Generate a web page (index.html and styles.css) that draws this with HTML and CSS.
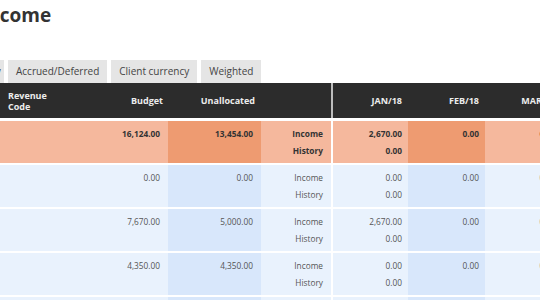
FILE: index.html
```html
<!DOCTYPE html>
<html>
<head>
<meta charset="utf-8">
<link rel="stylesheet" href="styles.css">
</head>
<body>
<div class="page">
  <h1 class="title">Income</h1>
  <div class="tabs">
    <div class="tab tab-first">Summary</div>
    <div class="tab">Accrued/Deferred</div>
    <div class="tab">Client currency</div>
    <div class="tab">Weighted</div>
  </div>
  <div class="grid">
    <div class="row head">
      <div class="c code">Revenue<br>Code</div>
      <div class="c num">Budget</div>
      <div class="c num unalloc">Unallocated</div>
      <div class="c label"></div>
      <div class="c num month sep">JAN/18</div>
      <div class="c num month">FEB/18</div>
      <div class="c num month mar">MAR/18</div>
    </div>
    <div class="row total">
      <div class="c code"></div>
      <div class="c num">16,124.00</div>
      <div class="c num dark">13,454.00</div>
      <div class="c num label"><span>Income</span><span>History</span></div>
      <div class="c num month sep"><span>2,670.00</span><span>0.00</span></div>
      <div class="c num month dark"><span>0.00</span></div>
      <div class="c num month"><span>0.00</span></div>
    </div>
    <div class="row">
      <div class="c code"></div>
      <div class="c num">0.00</div>
      <div class="c num dark">0.00</div>
      <div class="c num label"><span>Income</span><span>History</span></div>
      <div class="c num month sep"><span>0.00</span><span>0.00</span></div>
      <div class="c num month dark"><span>0.00</span></div>
      <div class="c num month"><span>0.00</span></div>
    </div>
    <div class="row">
      <div class="c code"></div>
      <div class="c num">7,670.00</div>
      <div class="c num dark">5,000.00</div>
      <div class="c num label"><span>Income</span><span>History</span></div>
      <div class="c num month sep"><span>2,670.00</span><span>0.00</span></div>
      <div class="c num month dark"><span>0.00</span></div>
      <div class="c num month"><span>0.00</span></div>
    </div>
    <div class="row">
      <div class="c code"></div>
      <div class="c num">4,350.00</div>
      <div class="c num dark">4,350.00</div>
      <div class="c num label"><span>Income</span><span>History</span></div>
      <div class="c num month sep"><span>0.00</span><span>0.00</span></div>
      <div class="c num month dark"><span>0.00</span></div>
      <div class="c num month"><span>0.00</span></div>
    </div>
    <div class="row">
      <div class="c code"></div>
      <div class="c num">0.00</div>
      <div class="c num dark">0.00</div>
      <div class="c num label"><span>Income</span><span>History</span></div>
      <div class="c num month sep"><span>0.00</span><span>0.00</span></div>
      <div class="c num month dark"><span>0.00</span></div>
      <div class="c num month"><span>0.00</span></div>
    </div>
  </div>
</div>
</body>
</html>
```
FILE: styles.css
```css
html, body {
  margin: 0;
  padding: 0;
  background: #ffffff;
  overflow: hidden;
}
body {
  width: 540px;
  height: 300px;
  font-family: "Open Sans", "DejaVu Sans", sans-serif;
  color: #444;
}
.page {
  width: 600px;
}
.title {
  margin: 0 0 0 -19px;
  padding-top: 2px;
  height: 58px;
  font-size: 19px;
  line-height: 26px;
  font-weight: 700;
  color: #333333;
}
.tabs {
  display: flex;
  gap: 4px;
  height: 23px;
}
.tab {
  background: #e5e5e5;
  font-size: 10px;
  line-height: 23px;
  padding: 0 8px;
  color: #444;
  white-space: nowrap;
}
.tab-first {
  width: 40px;
  margin-left: -52px;
}
.grid {
  display: flex;
  flex-direction: column;
  gap: 2px;
}
.row {
  display: grid;
  grid-template-columns: 100px 68px 93px 70px 77px 77px 77px;
  height: 42px;
  background: #e9f2fd;
}
.row.head {
  height: 35px;
  background: #2c2c2c;
  margin-bottom: 1px;
  color: #ececec;
  font-weight: 700;
  font-size: 9px;
}
.head .c {
  display: flex;
  align-items: center;
  justify-content: flex-end;
  padding-right: 5px;
  font-size: 9px;
}
.head .code {
  justify-content: flex-start;
  padding-left: 8px;
  line-height: 11px;
}
.head .unalloc {
  padding-right: 6px;
}
.head .month {
  padding-right: 1px;
}
.head .sep {
  border-left: 2px solid #bdbdbd;
}
.c {
  box-sizing: border-box;
  font-size: 8.3px;
  white-space: nowrap;
}
.row:not(.head) .c {
  padding-top: 4px;
  line-height: 17px;
  color: #555;
}
.num {
  text-align: right;
  padding-right: 8px;
}
.row .month {
  padding-right: 6px;
}
.row:not(.head) .sep {
  border-left: 2px solid #ffffff;
}
.c span {
  display: block;
}
.row .dark {
  background: #d8e7fb;
}
.row.total {
  background: #f5b89d;
  font-weight: 700;
}
.row.total .c {
  color: #333;
}
.row.total .dark {
  background: #ee9b71;
}
```
